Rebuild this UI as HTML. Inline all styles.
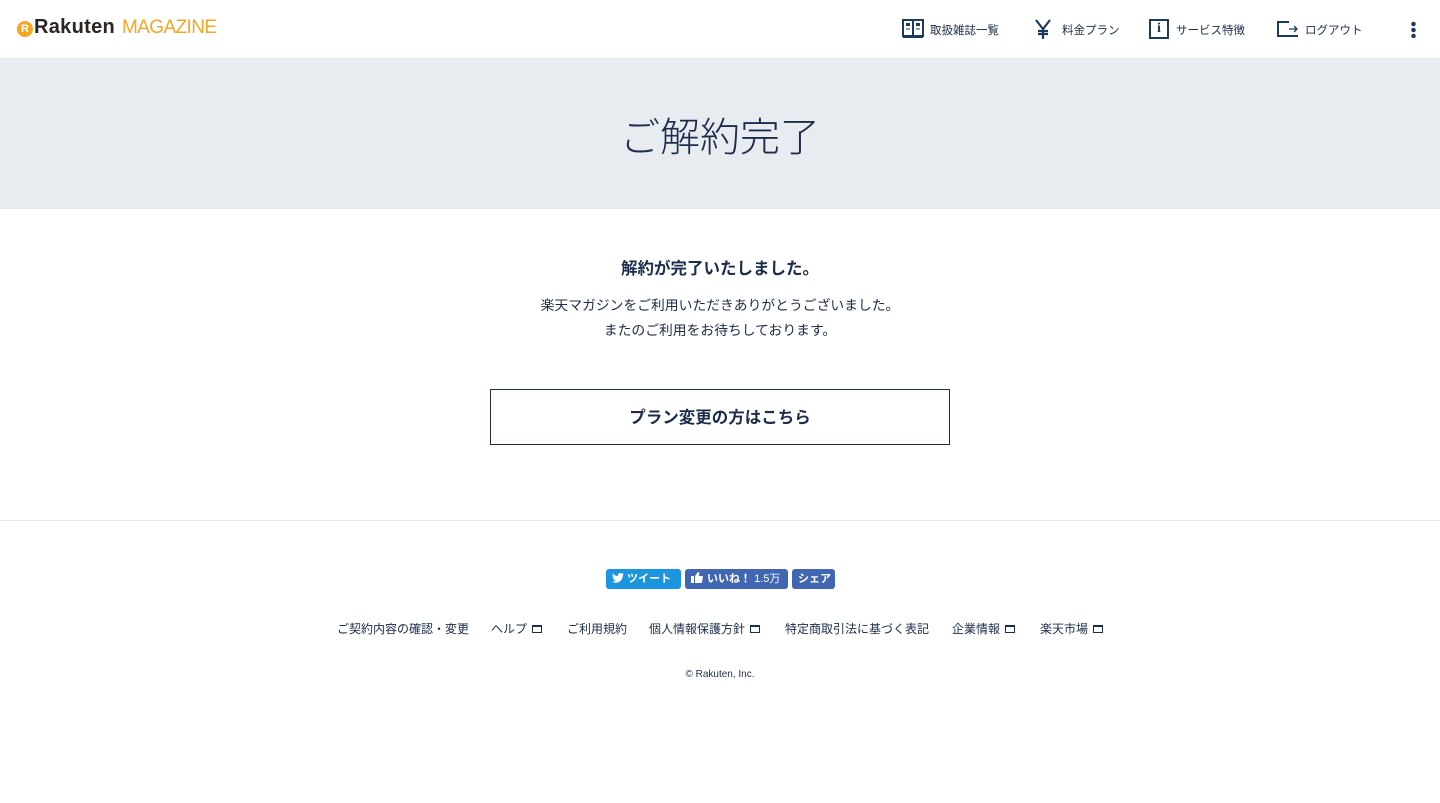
<!DOCTYPE html>
<html><head><meta charset="utf-8"><style>
*{margin:0;padding:0;box-sizing:border-box}
body{width:1440px;height:803px;background:#fff;font-family:"Liberation Sans","Noto Sans CJK JP",sans-serif;color:#1c2d4b;position:relative;overflow:hidden}
.a{position:absolute;white-space:nowrap}
.hdr{position:absolute;left:0;top:0;width:1440px;height:59px;border-bottom:1px solid #e6e6e6}
.band{position:absolute;left:0;top:59px;width:1440px;height:150px;background:#e8ebf0}
.nav{font-size:11.5px;top:22px}
.fl{font-size:12px;top:620px}
.ext{display:inline-block;width:10px;height:8px;border:1px solid #1c2d4b;border-top-width:2px;margin-left:5px;vertical-align:0}
.btn{position:absolute;top:569px;height:20px;border-radius:3px;color:#fff;font-size:11px;font-weight:bold;line-height:20px;padding-left:6px}
</style></head><body>
<div class="hdr"></div>
<div class="a" style="left:17px;top:21px;width:16px;height:16px;border-radius:50%;background:#f5a623;color:#fff;font-size:11px;font-weight:bold;text-align:center;line-height:16px">R</div>
<div class="a" style="left:34px;top:16px;font-size:20px;font-weight:bold;color:#2a2522;letter-spacing:0.3px">Rakuten</div>
<div class="a" style="left:122px;top:17px;font-size:19px;color:#f5a623;letter-spacing:-0.6px">MAGAZINE</div>

<svg class="a" style="left:902px;top:19px" width="22" height="20" viewBox="0 0 22 20"><rect x="1" y="1" width="20" height="16" fill="none" stroke="#1c3a5e" stroke-width="2"/><line x1="11" y1="1" x2="11" y2="17" stroke="#1c3a5e" stroke-width="2"/><rect x="4" y="4" width="4" height="3" fill="#1c3a5e"/><rect x="14" y="4" width="4" height="3" fill="#1c3a5e"/><line x1="4" y1="10" x2="8" y2="10" stroke="#1c3a5e"/><line x1="14" y1="10" x2="18" y2="10" stroke="#1c3a5e"/><path d="M1 18h20" stroke="#1c3a5e" stroke-width="2"/></svg>
<div class="a nav" style="left:930px">取扱雑誌一覧</div>
<svg class="a" style="left:1035px;top:19px" width="16" height="20" viewBox="0 0 16 20"><path d="M1 1l7 9 7-9M8 10v10M3 12h10M3 15h10" fill="none" stroke="#1c3a5e" stroke-width="2.2"/></svg>
<div class="a nav" style="left:1062px">料金プラン</div>
<div class="a" style="left:1149px;top:19px;width:20px;height:20px;border:2px solid #1c3a5e;font-family:'Liberation Serif',serif;font-weight:bold;font-size:14px;text-align:center;line-height:16px;color:#1c3a5e">i</div>
<div class="a nav" style="left:1176px">サービス特徴</div>
<svg class="a" style="left:1277px;top:21px" width="22" height="16" viewBox="0 0 22 16"><path d="M12 1H1v14h20" fill="none" stroke="#1c3a5e" stroke-width="2"/><path d="M12 8h8M17 5l3 3-3 3" fill="none" stroke="#1c3a5e" stroke-width="1.3"/></svg>
<div class="a nav" style="left:1305px">ログアウト</div>
<div class="a" style="left:1411px;top:21px;width:5px;height:17px;background:radial-gradient(circle,#1c3a5e 2px,transparent 2.5px) 0 0/5px 6px repeat-y"></div>

<div class="band"></div>
<div class="a" style="left:0;width:1440px;text-align:center;top:105px;font-size:40px;font-weight:300;color:#1c2d4b">ご解約完了</div>

<div class="a" style="left:0;width:1440px;text-align:center;top:255px;font-size:16.5px;font-weight:bold">解約が完了いたしました。</div>
<div class="a" style="left:0;width:1440px;text-align:center;top:293px;font-size:13.8px;line-height:25px">楽天マガジンをご利用いただきありがとうございました。<br>またのご利用をお待ちしております。</div>
<div class="a" style="left:490px;top:389px;width:460px;height:56px;border:1px solid #1c2d4b;text-align:center;line-height:56px;font-size:16.5px;font-weight:bold">プラン変更の方はこちら</div>

<div class="a" style="left:0;top:520px;width:1440px;height:1px;background:#e6e6e6"></div>

<div class="btn" style="left:606px;width:75px;background:#1b95e0"><svg width="12" height="10" viewBox="0 0 24 20" style="vertical-align:-1px;margin-right:3px"><path fill="#fff" d="M24 2.4a10 10 0 0 1-2.8.8A5 5 0 0 0 23.3.4a10 10 0 0 1-3.1 1.2A4.9 4.9 0 0 0 11.8 6 14 14 0 0 1 1.7.9a4.9 4.9 0 0 0 1.5 6.6A4.9 4.9 0 0 1 1 6.9a4.9 4.9 0 0 0 3.9 4.8 5 5 0 0 1-2.2.1 4.9 4.9 0 0 0 4.6 3.4A9.9 9.9 0 0 1 0 17.3 14 14 0 0 0 7.5 19.5c9 0 14-7.5 14-14v-.6A10 10 0 0 0 24 2.4z"/></svg>ツイート</div>
<div class="btn" style="left:685px;width:103px;background:#4267b2"><svg width="12" height="11" viewBox="0 0 12 11" style="vertical-align:-1px;margin-right:4px"><rect x="0" y="4" width="3" height="7" fill="#fff"/><path d="M4 4l3-4c1 0 1.5.5 1.2 2L7.8 4H11c.8 0 1 .6.9 1.2L11 10c-.1.6-.5 1-1 1H4z" fill="#fff"/></svg>いいね！ <span style="font-weight:normal">1.5万</span></div>
<div class="btn" style="left:792px;width:43px;background:#4267b2">シェア</div>

<div class="a fl" style="left:337px">ご契約内容の確認・変更</div>
<div class="a fl" style="left:491px">ヘルプ<span class="ext"></span></div>
<div class="a fl" style="left:567px">ご利用規約</div>
<div class="a fl" style="left:649px">個人情報保護方針<span class="ext"></span></div>
<div class="a fl" style="left:785px">特定商取引法に基づく表記</div>
<div class="a fl" style="left:952px">企業情報<span class="ext"></span></div>
<div class="a fl" style="left:1040px">楽天市場<span class="ext"></span></div>

<div class="a" style="left:0;width:1440px;text-align:center;top:669px;font-size:10px">© Rakuten, Inc.</div>
</body></html>
